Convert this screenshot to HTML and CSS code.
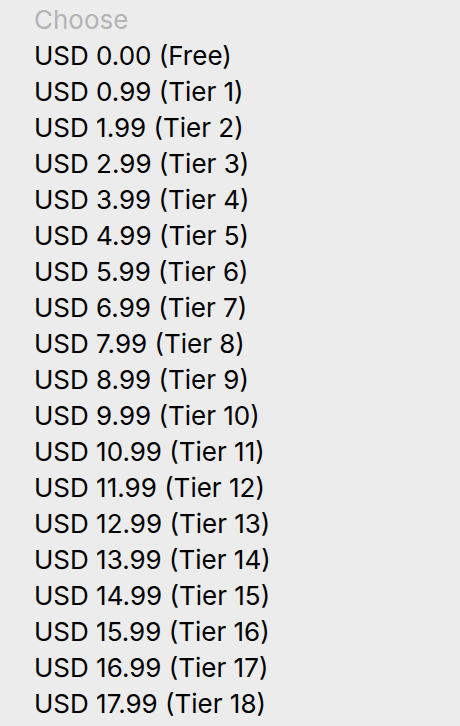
FILE: index.html
```html
<!DOCTYPE html>
<html lang="en">
<head>
    <meta charset="UTF-8">
    <meta name="viewport" content="width=device-width, initial-scale=1.0">
    <title>Price Tier</title>
    <link rel="stylesheet" href="styles.css">
</head>
<body>
    <ul class="menu">
        <li class="menu-item placeholder">Choose</li>
        <li class="menu-item">USD 0.00 (Free)</li>
        <li class="menu-item">USD 0.99 (Tier 1)</li>
        <li class="menu-item">USD 1.99 (Tier 2)</li>
        <li class="menu-item">USD 2.99 (Tier 3)</li>
        <li class="menu-item">USD 3.99 (Tier 4)</li>
        <li class="menu-item">USD 4.99 (Tier 5)</li>
        <li class="menu-item">USD 5.99 (Tier 6)</li>
        <li class="menu-item">USD 6.99 (Tier 7)</li>
        <li class="menu-item">USD 7.99 (Tier 8)</li>
        <li class="menu-item">USD 8.99 (Tier 9)</li>
        <li class="menu-item">USD 9.99 (Tier 10)</li>
        <li class="menu-item">USD 10.99 (Tier 11)</li>
        <li class="menu-item">USD 11.99 (Tier 12)</li>
        <li class="menu-item">USD 12.99 (Tier 13)</li>
        <li class="menu-item">USD 13.99 (Tier 14)</li>
        <li class="menu-item">USD 14.99 (Tier 15)</li>
        <li class="menu-item">USD 15.99 (Tier 16)</li>
        <li class="menu-item">USD 16.99 (Tier 17)</li>
        <li class="menu-item">USD 17.99 (Tier 18)</li>
    </ul>
</body>
</html>
```

FILE: styles.css
```css
body {
    background-color: #ececec;
    color: #000000;
    font-family: Inter, "Noto Sans", sans-serif;
    margin: 0;
    padding: 0;
}

.menu {
    list-style: none;
    margin: 0;
    padding: 2px 0 0 34px;
}

.menu-item {
    height: 36px;
    line-height: 36px;
    font-size: 26px;
    white-space: nowrap;
}

.placeholder {
    color: #b4b4b4;
}
```
